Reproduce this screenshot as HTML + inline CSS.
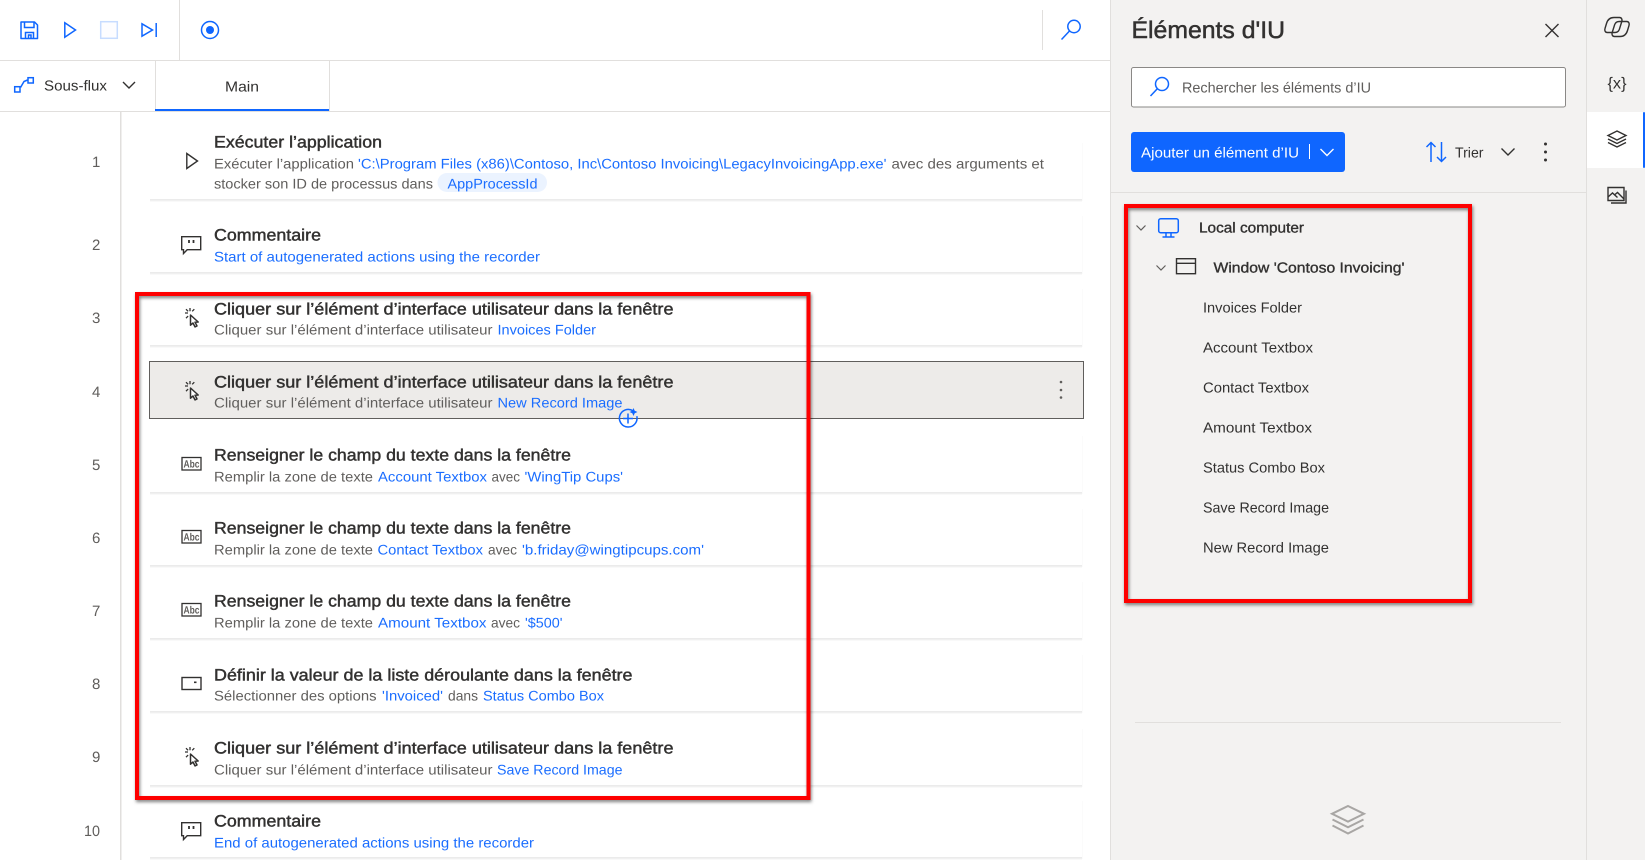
<!DOCTYPE html>
<html lang="fr">
<head>
<meta charset="utf-8">
<title>Éléments d'IU</title>
<style>
html,body{margin:0;padding:0;width:1645px;height:860px;overflow:hidden;background:#fff}
svg{display:block;font-family:"Liberation Sans",Arial,sans-serif}
text{text-rendering:geometricPrecision}
.t{font-size:16.5px;fill:#323130;stroke:#323130;stroke-width:.45px;transform:translateY(-.7px)}
.d{font-size:14px;fill:#605e5c;transform:translateY(-.5px)}
.b{font-size:14px;fill:#1a6dff;transform:translateY(-.5px)}
.n{font-size:15px;fill:#605e5c}
.l{font-size:14.5px;fill:#323130;transform:translateY(-.4px)}
.ls{font-size:14.5px;fill:#323130;stroke:#323130;stroke-width:.35px;transform:translateY(-.4px)}
.bl{fill:none;stroke:#0f66ff;stroke-width:1.5}
.dk{fill:none;stroke:#323130;stroke-width:1.4}
.red{fill:none;stroke:#fe0000;stroke-width:4;filter:drop-shadow(1.5px 2px 1.5px rgba(0,0,0,.5))}
</style>
</head>
<body>
<svg width="1645" height="860" viewBox="0 0 1645 860" xmlns="http://www.w3.org/2000/svg">
<defs>
<g id="cur">
<path d="M190.500 315v10.200l2.500-2.200 2 3.900 2-1-2-3.700 3.200-.2z" fill="#fff" stroke="#323130" stroke-width="1.500" stroke-linejoin="round"/>
<path d="M190 308v3.200M185 313h3M186 309.200l2.100 2.100M194.300 309.200l-2.100 2.100M186 318.200l2.100-2.100" stroke="#323130" stroke-width="1.300" fill="none"/>
</g>
<g id="abc">
<rect x="182" y="457.500" width="19" height="12.500" fill="#fff" stroke="#323130" stroke-width="1.300"/>
<text x="191.500" y="467.500" text-anchor="middle" font-size="10.500" font-weight="bold" fill="#605e5c" textLength="16" lengthAdjust="spacingAndGlyphs">Abc</text>
</g>
<g id="com">
<path d="M181.700 236.700h19v13h-13.500l-3.700 3.800v-3.800h-1.800z" class="dk"/>
<path d="M189 240v3M193.500 240v3" stroke="#323130" stroke-width="1.800"/>
</g>
<g id="sh">
<rect x="150" y="0" width="932" height="1" fill="#ebebeb"/>
<rect x="150" y="1" width="932" height="1" fill="#f0f0f0"/>
<rect x="150" y="2" width="932" height="1" fill="#f9f9f9"/>
<rect x="1082" y="-56" width="1" height="58" fill="#fbfbfb"/>
</g>
</defs>

<!-- Side panels -->
<rect x="1110" y="0" width="535" height="860" fill="#f3f2f1"/>
<rect x="1110" y="0" width="1" height="860" fill="#e1dfdd"/>
<rect x="1586" y="0" width="1" height="860" fill="#e1dfdd"/>

<!-- Toolbar -->
<rect x="0" y="60" width="1110" height="1" fill="#e1dfdd"/>
<rect x="179" y="0" width="1" height="60" fill="#e1dfdd"/>
<rect x="1042" y="10" width="1" height="40" fill="#e1dfdd"/>
<path d="M21 22h13.500l3 3v13.500H21z" class="bl" stroke-linejoin="round"/>
<path d="M24.500 22v5.500h9.500V22M25.500 38.500v-6h8v6M28.500 38v-3h2.500v3" class="bl" stroke-width="1.300"/>
<path d="M64.800 22.800L75.500 30 64.800 37.200z" class="bl"/>
<rect x="100.700" y="21.700" width="16.600" height="16.600" fill="#fdfdff" stroke="#c7dcff" stroke-width="1.500"/>
<path d="M142 23.800L152.500 30 142 36.200z M156.200 23v14" class="bl"/>
<circle cx="210" cy="30" r="8.500" class="bl"/>
<circle cx="210" cy="30" r="4" fill="#0f66ff"/>
<circle cx="1074" cy="26.500" r="6.200" class="bl" stroke-width="1.300"/>
<path d="M1069.500 31L1061.500 39.500" class="bl" stroke-width="1.400"/>

<!-- Tabs -->
<rect x="0" y="111" width="1110" height="1" fill="#e1dfdd"/>
<rect x="155" y="60" width="1" height="51" fill="#e1dfdd"/>
<rect x="329" y="60" width="1" height="51" fill="#e1dfdd"/>
<rect x="155" y="109" width="174" height="2" fill="#0f66ff"/>
<rect x="14.700" y="86.700" width="5.300" height="5.300" class="bl" stroke-width="1.300"/>
<rect x="28" y="77.700" width="5.300" height="5.300" class="bl" stroke-width="1.300"/>
<path d="M20.500 87.500l3.500-6 3.500-1.500" class="bl" stroke-width="1.200"/>
<text x="44" y="91" class="l" textLength="63" lengthAdjust="spacingAndGlyphs">Sous-flux</text>
<path d="M123 82l6 6 6-6" class="dk" stroke-width="1.300"/>
<text x="225" y="92" class="l" textLength="34" lengthAdjust="spacingAndGlyphs">Main</text>

<!-- Left gutter -->
<rect x="120" y="112" width="1.500" height="748" fill="#e1dfdd"/>
<g class="n">
<text x="92" y="167">1</text>
<text x="92" y="250">2</text>
<text x="92" y="323">3</text>
<text x="92" y="397">4</text>
<text x="92" y="470">5</text>
<text x="92" y="543">6</text>
<text x="92" y="616">7</text>
<text x="92" y="689">8</text>
<text x="92" y="762">9</text>
<text x="84" y="836" textLength="16" lengthAdjust="spacingAndGlyphs">10</text>
</g>

<!-- Card shadows (bottom edge only) -->
<use href="#sh" y="199"/>
<use href="#sh" y="272"/>
<use href="#sh" y="345"/>
<rect x="149.500" y="361.500" width="934" height="57" fill="#edebe9" stroke="#605e5c" stroke-width="1"/>
<use href="#sh" y="492"/>
<use href="#sh" y="565"/>
<use href="#sh" y="638"/>
<use href="#sh" y="711"/>
<use href="#sh" y="785"/>
<use href="#sh" y="857"/>

<!-- Card 1 -->
<path d="M186.800 153.500L197.500 161 186.800 168.500z" class="dk"/>
<text x="214" y="148" class="t" textLength="168" lengthAdjust="spacingAndGlyphs">Exécuter l’application</text>
<text x="214" y="169" class="d" textLength="140" lengthAdjust="spacingAndGlyphs">Exécuter l’application</text>
<text x="358" y="169" class="b" textLength="528.500" lengthAdjust="spacingAndGlyphs">'C:\Program Files (x86)\Contoso, Inc\Contoso Invoicing\LegacyInvoicingApp.exe'</text>
<text x="891.500" y="169" class="d" textLength="152.500" lengthAdjust="spacingAndGlyphs">avec des arguments  et</text>
<text x="214" y="189" class="d" textLength="219" lengthAdjust="spacingAndGlyphs">stocker son ID de processus dans</text>
<rect x="437.500" y="173" width="109.500" height="19" rx="9.500" fill="#ebf3ff"/>
<text x="447.500" y="189" class="b" textLength="90" lengthAdjust="spacingAndGlyphs">AppProcessId</text>

<!-- Card 2 -->
<use href="#com"/>
<text x="214" y="241" class="t" textLength="107" lengthAdjust="spacingAndGlyphs">Commentaire</text>
<text x="214" y="262" class="b" textLength="326" lengthAdjust="spacingAndGlyphs">Start of autogenerated actions using the recorder</text>

<!-- Card 3 -->
<use href="#cur"/>
<text x="214" y="315" class="t" textLength="459.500" lengthAdjust="spacingAndGlyphs">Cliquer sur l’élément d’interface utilisateur dans la fenêtre</text>
<text x="214" y="335" class="d" textLength="278.500" lengthAdjust="spacingAndGlyphs">Cliquer sur l’élément d’interface utilisateur</text>
<text x="497.500" y="335" class="b" textLength="98.500" lengthAdjust="spacingAndGlyphs">Invoices Folder</text>

<!-- Card 4 -->
<use href="#cur" y="73"/>
<text x="214" y="388" class="t" textLength="459.500" lengthAdjust="spacingAndGlyphs">Cliquer sur l’élément d’interface utilisateur dans la fenêtre</text>
<text x="214" y="408" class="d" textLength="278.500" lengthAdjust="spacingAndGlyphs">Cliquer sur l’élément d’interface utilisateur</text>
<text x="497.500" y="408" class="b" textLength="125" lengthAdjust="spacingAndGlyphs">New Record Image</text>
<circle cx="1061" cy="382" r="1.300" fill="#605e5c"/><circle cx="1061" cy="390" r="1.300" fill="#605e5c"/><circle cx="1061" cy="397.500" r="1.300" fill="#605e5c"/>
<path d="M633 410.800a8.800 8.800 0 1 0 3.800 5.400" class="bl" stroke-width="1.300"/>
<path d="M623 418.500h10M628 413.500v10" class="bl" stroke-width="1.300"/>
<path d="M633.500 408l1.200 2.800 2.800 1.200-2.800 1.200-1.200 2.800-1.200-2.800-2.800-1.200 2.800-1.200z" fill="#0f66ff"/>

<!-- Card 5 -->
<use href="#abc"/>
<text x="214" y="461" class="t" textLength="357" lengthAdjust="spacingAndGlyphs">Renseigner le champ du texte dans la fenêtre</text>
<text x="214" y="482" class="d" textLength="159" lengthAdjust="spacingAndGlyphs">Remplir la zone de texte</text>
<text x="378" y="482" class="b" textLength="109" lengthAdjust="spacingAndGlyphs">Account Textbox</text>
<text x="491.500" y="482" class="d" textLength="28.500" lengthAdjust="spacingAndGlyphs">avec</text>
<text x="524.500" y="482" class="b" textLength="98.500" lengthAdjust="spacingAndGlyphs">'WingTip Cups'</text>

<!-- Card 6 -->
<use href="#abc" y="73"/>
<text x="214" y="534" class="t" textLength="357" lengthAdjust="spacingAndGlyphs">Renseigner le champ du texte dans la fenêtre</text>
<text x="214" y="555" class="d" textLength="159" lengthAdjust="spacingAndGlyphs">Remplir la zone de texte</text>
<text x="377.500" y="555" class="b" textLength="105.500" lengthAdjust="spacingAndGlyphs">Contact Textbox</text>
<text x="488" y="555" class="d" textLength="29" lengthAdjust="spacingAndGlyphs">avec</text>
<text x="522" y="555" class="b" textLength="182" lengthAdjust="spacingAndGlyphs">'b.friday@wingtipcups.com'</text>

<!-- Card 7 -->
<use href="#abc" y="146"/>
<text x="214" y="607" class="t" textLength="357" lengthAdjust="spacingAndGlyphs">Renseigner le champ du texte dans la fenêtre</text>
<text x="214" y="628" class="d" textLength="159" lengthAdjust="spacingAndGlyphs">Remplir la zone de texte</text>
<text x="378" y="628" class="b" textLength="108.500" lengthAdjust="spacingAndGlyphs">Amount Textbox</text>
<text x="491" y="628" class="d" textLength="29" lengthAdjust="spacingAndGlyphs">avec</text>
<text x="525" y="628" class="b" textLength="37.500" lengthAdjust="spacingAndGlyphs">'$500'</text>

<!-- Card 8 -->
<rect x="182" y="677.500" width="19" height="12" class="dk" stroke-width="1.300"/>
<rect x="194" y="681.500" width="2.500" height="1.600" fill="#323130"/>
<text x="214" y="681" class="t" textLength="418.500" lengthAdjust="spacingAndGlyphs">Définir la valeur de la liste déroulante dans la fenêtre</text>
<text x="214" y="701" class="d" textLength="162.500" lengthAdjust="spacingAndGlyphs">Sélectionner des options</text>
<text x="382" y="701" class="b" textLength="61" lengthAdjust="spacingAndGlyphs">'Invoiced'</text>
<text x="448" y="701" class="d" textLength="30" lengthAdjust="spacingAndGlyphs">dans</text>
<text x="483" y="701" class="b" textLength="121" lengthAdjust="spacingAndGlyphs">Status Combo Box</text>

<!-- Card 9 -->
<use href="#cur" y="439"/>
<text x="214" y="754" class="t" textLength="459.500" lengthAdjust="spacingAndGlyphs">Cliquer sur l’élément d’interface utilisateur dans la fenêtre</text>
<text x="214" y="775" class="d" textLength="278.500" lengthAdjust="spacingAndGlyphs">Cliquer sur l’élément d’interface utilisateur</text>
<text x="497" y="775" class="b" textLength="125.500" lengthAdjust="spacingAndGlyphs">Save Record Image</text>

<!-- Card 10 -->
<use href="#com" y="586"/>
<text x="214" y="827" class="t" textLength="107" lengthAdjust="spacingAndGlyphs">Commentaire</text>
<text x="214" y="848" class="b" textLength="320" lengthAdjust="spacingAndGlyphs">End of autogenerated actions using the recorder</text>

<!-- Right panel header -->
<text x="1131.500" y="38" font-size="24" fill="#323130" stroke="#323130" stroke-width=".5" textLength="153.500" lengthAdjust="spacingAndGlyphs">Éléments d'IU</text>
<path d="M1545.500 24l13 13M1558.500 24l-13 13" class="dk" stroke-width="1.300"/>
<rect x="1131.500" y="67.500" width="434" height="39.500" rx="2" fill="#fff" stroke="#8a8886"/>
<circle cx="1162" cy="84" r="6.500" class="bl" stroke-width="1.300"/>
<path d="M1157.300 88.700L1150.500 96" class="bl" stroke-width="1.400"/>
<text x="1182" y="92.500" font-size="14.500" fill="#605e5c" textLength="189" lengthAdjust="spacingAndGlyphs">Rechercher les éléments d’IU</text>

<rect x="1131" y="132" width="214" height="40" rx="3" fill="#0f66ff"/>
<text x="1141" y="157.500" font-size="14.500" fill="#fff" textLength="158" lengthAdjust="spacingAndGlyphs">Ajouter un élément d’IU</text>
<rect x="1309" y="144" width="1" height="15" fill="#fff"/>
<path d="M1320.500 149l6.500 6.500 6.500-6.500" fill="none" stroke="#fff" stroke-width="1.400"/>
<path d="M1431 162v-19.500M1426.500 147l4.500-4.500 4.500 4.500M1441.500 142v19.500M1437 157l4.500 4.500 4.500-4.500" class="bl" stroke-width="1.300"/>
<text x="1455" y="158" class="l" textLength="28.500" lengthAdjust="spacingAndGlyphs">Trier</text>
<path d="M1501.500 148.500l6.500 6.500 6.500-6.500" class="dk" stroke-width="1.300"/>
<circle cx="1545.500" cy="144" r="1.500" fill="#323130"/><circle cx="1545.500" cy="152" r="1.500" fill="#323130"/><circle cx="1545.500" cy="160" r="1.500" fill="#323130"/>
<rect x="1110" y="192" width="476" height="1" fill="#e1dfdd"/>

<!-- Tree -->
<path d="M1136.500 225.500l4.500 4.500 4.500-4.500" fill="none" stroke="#605e5c" stroke-width="1.200"/>
<rect x="1158.700" y="218.700" width="19.600" height="14" rx="2" class="bl"/>
<path d="M1166 233v3.500M1171 233v3.500M1162.500 237h12" class="bl" stroke-width="1.300"/>
<text x="1199" y="233" class="ls" textLength="105" lengthAdjust="spacingAndGlyphs">Local computer</text>
<path d="M1156.500 265.500l4.500 4.500 4.500-4.500" fill="none" stroke="#605e5c" stroke-width="1.200"/>
<rect x="1176.500" y="258.700" width="19" height="15" class="dk" stroke-width="1.300"/>
<path d="M1176.500 263.300h19" class="dk" stroke-width="1.300"/>
<text x="1213.500" y="273" class="ls" textLength="191" lengthAdjust="spacingAndGlyphs">Window 'Contoso Invoicing'</text>
<text x="1203" y="313" class="l" textLength="99" lengthAdjust="spacingAndGlyphs">Invoices Folder</text>
<text x="1203" y="353" class="l" textLength="110" lengthAdjust="spacingAndGlyphs">Account Textbox</text>
<text x="1203" y="393" class="l" textLength="106" lengthAdjust="spacingAndGlyphs">Contact Textbox</text>
<text x="1203" y="433" class="l" textLength="109" lengthAdjust="spacingAndGlyphs">Amount Textbox</text>
<text x="1203" y="473" class="l" textLength="122" lengthAdjust="spacingAndGlyphs">Status Combo Box</text>
<text x="1203" y="513" class="l" textLength="126" lengthAdjust="spacingAndGlyphs">Save Record Image</text>
<text x="1203" y="553" class="l" textLength="126" lengthAdjust="spacingAndGlyphs">New Record Image</text>

<!-- Bottom of panel -->
<rect x="1135" y="722" width="426" height="1" fill="#e1dfdd"/>
<g fill="none" stroke="#a8a6a4" stroke-width="2">
<path d="M1348 806l16 7.800-16 7.800-16-7.800z"/>
<path d="M1332.500 819.500l15.500 7.800 15.500-7.800"/>
<path d="M1332.500 825.500l15.500 8 15.500-8"/>
</g>

<!-- Right rail -->
<rect x="1587" y="112" width="58" height="56" fill="#fff"/>
<rect x="1643" y="112" width="2" height="56" rx="1" fill="#0f66ff"/>
<g fill="none" stroke="#323130" stroke-width="1.400">
<path d="M1614 17.500h5.500c2 0 3 2 2.300 4l-2.500 8c-.8 2-2.500 3-4.500 3h-7.500c-2 0-3-2-2.300-4l1.500-5c1-3.500 3.500-6 7.500-6z"/>
<path d="M1620 36.500h-5.500c-2 0-3-2-2.300-4l2.500-8c.8-2 2.500-3 4.500-3h7.500c2 0 3 2 2.300 4l-1.500 5c-1 3.500-3.500 6-7.500 6z"/>
</g>
<text x="1617" y="88.500" text-anchor="middle" font-size="16" fill="#323130" textLength="19" lengthAdjust="spacingAndGlyphs">{x}</text>
<g fill="none" stroke="#323130" stroke-width="1.400">
<path d="M1617 131l9 4.500-9 4.500-9-4.500z"/>
<path d="M1608 139l9 4.500 9-4.500"/>
<path d="M1608 142.500l9 4.500 9-4.500"/>
<path d="M1608 187.500h16v13h-16z"/>
<path d="M1626 190.500v12.500h-15"/>
<path d="M1608 197l4.500-4 5 4.500M1615 194.500l2.500-2 6.500 6.500"/>
</g>

<!-- Red annotation rectangles -->
<rect class="red" x="137" y="294" width="671.500" height="504"/>
<rect class="red" x="1126" y="206" width="344" height="395"/>
</svg>
</body>
</html>
